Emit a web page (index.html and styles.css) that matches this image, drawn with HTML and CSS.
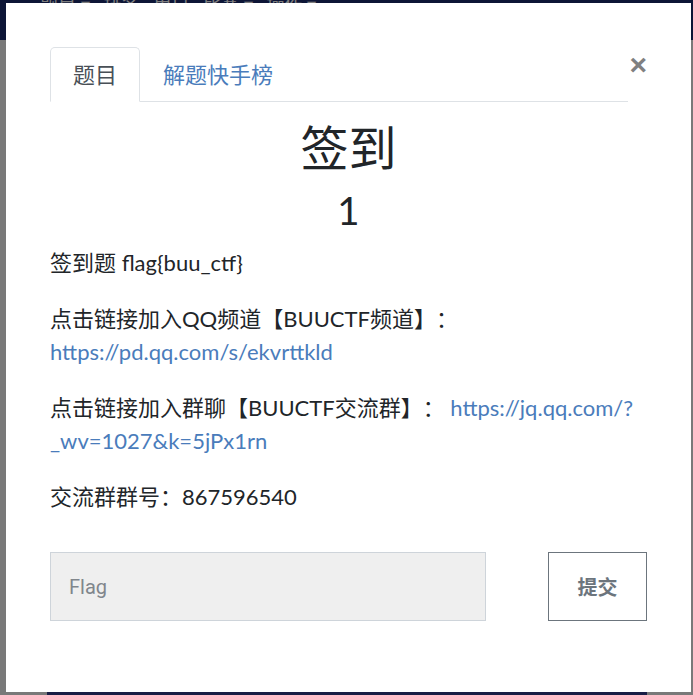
FILE: index.html
```html
<!DOCTYPE html>
<html lang="zh">
<head>
<meta charset="utf-8">
<title>签到</title>
<link rel="stylesheet" href="styles.css">
</head>
<body>
<div class="page">
  <header class="navbar"><span class="nav-text">题目 ▾ &nbsp; 排名 &nbsp; 用户 &nbsp; 比赛 ▾ &nbsp; 操作 ▾</span></header>
  <main class="page-main">
    <div class="page-footer"></div>
  </main>
</div>
<div class="backdrop"></div>
<div class="modal">
  <div class="modal-body">
    <div class="modal-top">
      <ul class="tabs">
        <li class="tab active">题目</li>
        <li class="tab">解题快手榜</li>
      </ul>
      <button class="close" type="button">×</button>
    </div>
    <h2 class="chal-name">签到</h2>
    <h3 class="chal-value">1</h3>
    <div class="chal-desc">
      <p>签到题 flag{buu_ctf}</p>
      <p>点击链接加入QQ频道【BUUCTF频道】：<br><a href="#">https://pd.qq.com/s/ekvrttkld</a></p>
      <p>点击链接加入群聊【BUUCTF交流群】： <a href="#">https://jq.qq.com/?_wv=1027&amp;k=5jPx1rn</a></p>
      <p>交流群群号：867596540</p>
    </div>
    <form class="submit-row">
      <input class="flag-input" type="text" placeholder="Flag">
      <button class="submit-btn" type="button">提交</button>
    </form>
  </div>
</div>
</body>
</html>
```
FILE: styles.css
```css
html, body {
  margin: 0;
  padding: 0;
  height: 100%;
}
body {
  font-family: Lato, "Noto Sans CJK SC", sans-serif;
  background: #f2f2f2;
  overflow: hidden;
}
.page {
  height: 100%;
  display: flex;
  flex-direction: column;
}
.navbar {
  height: 40px;
  background: #1a2a6c;
  color: #fff;
  font-size: 18px;
  padding: 0 40px;
  line-height: 8px;
  flex: none;
  overflow: hidden;
}
.nav-text {
  white-space: nowrap;
}
.page-main {
  flex: 1;
  display: flex;
  flex-direction: column;
  justify-content: flex-end;
  align-items: center;
}
.page-footer {
  width: 600px;
  height: 4px;
  background: #303a8a;
}
.backdrop {
  position: fixed;
  inset: 0;
  background: rgba(0, 0, 0, 0.5);
}
.modal {
  position: fixed;
  left: 6px;
  top: 3px;
  width: 685px;
  height: 689px;
  background: #fff;
  box-sizing: border-box;
}
.modal-body {
  padding: 44px;
  color: #212529;
}
.modal-top {
  display: flex;
  align-items: flex-start;
}
.tabs {
  list-style: none;
  margin: 0;
  padding: 0;
  display: flex;
  flex: 1;
  border-bottom: 1px solid #dee2e6;
}
.tab {
  font-size: 22px;
  line-height: 33px;
  padding: 10px 22px;
  border: 1px solid transparent;
  border-radius: 5px 5px 0 0;
  margin-bottom: -1px;
  color: #4a7cbb;
}
.tab.active {
  color: #495057;
  border-color: #dee2e6 #dee2e6 #fff;
  background: #fff;
}
.close {
  width: 19px;
  margin-top: 7px;
  background: none;
  border: 0;
  padding: 0;
  font-family: "Liberation Sans", sans-serif;
  font-size: 30px;
  line-height: 22px;
  font-weight: 700;
  color: #808080;
  text-align: right;
}
.chal-name {
  margin: 18px 0 0;
  font-size: 48px;
  font-weight: 400;
  line-height: 56px;
  text-align: center;
  color: #212529;
}
.chal-value {
  margin: 11px 0 0;
  font-size: 38.4px;
  font-weight: 400;
  line-height: 46px;
  text-align: center;
  color: #212529;
}
.chal-desc {
  margin-top: 13px;
  font-size: 22px;
  line-height: 33px;
  text-spacing-trim: space-all;
}
.chal-desc p {
  margin: 0 0 23px;
}
.chal-desc p:last-child {
  margin-bottom: 0;
}
.chal-desc a {
  color: #4a7cbb;
  text-decoration: none;
}
.submit-row {
  margin-top: 39px;
  display: grid;
  grid-template-columns: 1fr 99px;
  column-gap: 62px;
}
.flag-input {
  height: 69px;
  box-sizing: border-box;
  border: 1px solid #ced4da;
  background: #efefef;
  font-family: Roboto, "Liberation Sans", sans-serif;
  font-size: 20px;
  padding: 0 18px;
  color: #495057;
}
.flag-input::placeholder {
  color: #80868c;
}
.submit-btn {
  height: 69px;
  box-sizing: border-box;
  border: 1px solid #6c757d;
  background: #fff;
  color: #6c757d;
  font-family: "Noto Sans CJK SC", sans-serif;
  font-size: 20px;
  font-weight: 700;
}
```
